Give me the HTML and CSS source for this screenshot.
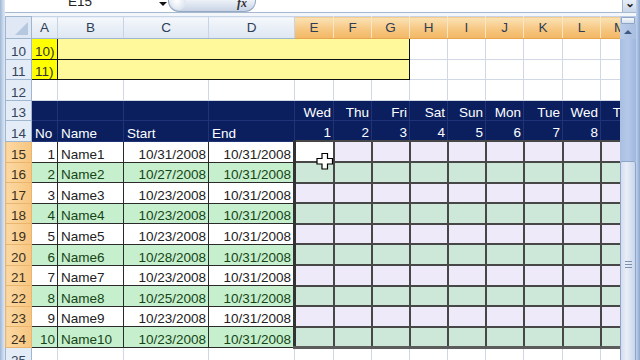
FILE: index.html
```html
<!DOCTYPE html>
<html>
<head>
<meta charset="utf-8">
<link rel="stylesheet" href="styles.css">
</head>
<body>
<div class="app">
  <div class="frame-l"></div>
  <div class="main">
    <div class="fbar">
      <div class="namebox"><span class="nb-text">E15</span><span class="nb-arrow"></span></div>
      <div class="fxpill"><span class="fx-bulb"></span><span class="fx">fx</span></div>
      <div class="finput"></div>
      <div class="fexpand">&#8964;</div>
    </div>
    <div class="gap"></div>
    <div class="area">
      <div class="sheet">
        <table class="grid">
          <colgroup>
            <col class="c-rh"><col class="c-a"><col class="c-b"><col class="c-c"><col class="c-d">
            <col class="c-e"><col class="c-n"><col class="c-n"><col class="c-n"><col class="c-n"><col class="c-n"><col class="c-e"><col class="c-n"><col class="c-n">
          </colgroup>
          <tr class="hd">
            <th class="corner"><span class="tri"></span></th>
            <th class="ch">A</th><th class="ch">B</th><th class="ch">C</th><th class="ch">D</th>
            <th class="ch sel">E</th><th class="ch sel">F</th><th class="ch sel">G</th><th class="ch sel">H</th><th class="ch sel">I</th><th class="ch sel">J</th><th class="ch sel">K</th><th class="ch sel">L</th><th class="ch sel">M</th>
          </tr>
          <tr>
            <th class="rh">10</th><td class="ya">10)</td><td class="yb" colspan="6"></td>
            <td></td><td></td><td></td><td></td><td></td><td></td>
          </tr>
          <tr>
            <th class="rh">11</th><td class="ya">11)</td><td class="yb" colspan="6"></td>
            <td></td><td></td><td></td><td></td><td></td><td></td>
          </tr>
          <tr>
            <th class="rh">12</th><td></td><td></td><td></td><td></td><td></td><td></td><td></td><td></td><td></td><td></td><td></td><td></td><td></td>
          </tr>
          <tr>
            <th class="rh">13</th><td class="nv"></td><td class="nv"></td><td class="nv"></td><td class="nv"></td>
            <td class="nv r">Wed</td><td class="nv r">Thu</td><td class="nv r">Fri</td><td class="nv r">Sat</td><td class="nv r">Sun</td><td class="nv r">Mon</td><td class="nv r">Tue</td><td class="nv r">Wed</td><td class="nv r">Thu</td>
          </tr>
          <tr>
            <th class="rh">14</th><td class="nv">No</td><td class="nv">Name</td><td class="nv">Start</td><td class="nv">End</td>
            <td class="nv r">1</td><td class="nv r">2</td><td class="nv r">3</td><td class="nv r">4</td><td class="nv r">5</td><td class="nv r">6</td><td class="nv r">7</td><td class="nv r">8</td><td class="nv r">9</td>
          </tr>
          <tr class="odd">
            <th class="rh hl">15</th><td class="d r">1</td><td class="d">Name1</td><td class="d r">10/31/2008</td><td class="d r">10/31/2008</td>
            <td class="s sl act"></td><td class="s"></td><td class="s"></td><td class="s"></td><td class="s"></td><td class="s"></td><td class="s"></td><td class="s"></td><td class="s"></td>
          </tr>
          <tr class="even">
            <th class="rh hl">16</th><td class="d r">2</td><td class="d">Name2</td><td class="d r">10/27/2008</td><td class="d r">10/31/2008</td>
            <td class="s sl"></td><td class="s"></td><td class="s"></td><td class="s"></td><td class="s"></td><td class="s"></td><td class="s"></td><td class="s"></td><td class="s"></td>
          </tr>
          <tr class="odd">
            <th class="rh hl">17</th><td class="d r">3</td><td class="d">Name3</td><td class="d r">10/23/2008</td><td class="d r">10/31/2008</td>
            <td class="s sl"></td><td class="s"></td><td class="s"></td><td class="s"></td><td class="s"></td><td class="s"></td><td class="s"></td><td class="s"></td><td class="s"></td>
          </tr>
          <tr class="even">
            <th class="rh hl">18</th><td class="d r">4</td><td class="d">Name4</td><td class="d r">10/23/2008</td><td class="d r">10/31/2008</td>
            <td class="s sl"></td><td class="s"></td><td class="s"></td><td class="s"></td><td class="s"></td><td class="s"></td><td class="s"></td><td class="s"></td><td class="s"></td>
          </tr>
          <tr class="odd">
            <th class="rh hl">19</th><td class="d r">5</td><td class="d">Name5</td><td class="d r">10/23/2008</td><td class="d r">10/31/2008</td>
            <td class="s sl"></td><td class="s"></td><td class="s"></td><td class="s"></td><td class="s"></td><td class="s"></td><td class="s"></td><td class="s"></td><td class="s"></td>
          </tr>
          <tr class="even">
            <th class="rh hl">20</th><td class="d r">6</td><td class="d">Name6</td><td class="d r">10/28/2008</td><td class="d r">10/31/2008</td>
            <td class="s sl"></td><td class="s"></td><td class="s"></td><td class="s"></td><td class="s"></td><td class="s"></td><td class="s"></td><td class="s"></td><td class="s"></td>
          </tr>
          <tr class="odd">
            <th class="rh hl">21</th><td class="d r">7</td><td class="d">Name7</td><td class="d r">10/23/2008</td><td class="d r">10/31/2008</td>
            <td class="s sl"></td><td class="s"></td><td class="s"></td><td class="s"></td><td class="s"></td><td class="s"></td><td class="s"></td><td class="s"></td><td class="s"></td>
          </tr>
          <tr class="even">
            <th class="rh hl">22</th><td class="d r">8</td><td class="d">Name8</td><td class="d r">10/25/2008</td><td class="d r">10/31/2008</td>
            <td class="s sl"></td><td class="s"></td><td class="s"></td><td class="s"></td><td class="s"></td><td class="s"></td><td class="s"></td><td class="s"></td><td class="s"></td>
          </tr>
          <tr class="odd">
            <th class="rh hl">23</th><td class="d r">9</td><td class="d">Name9</td><td class="d r">10/23/2008</td><td class="d r">10/31/2008</td>
            <td class="s sl"></td><td class="s"></td><td class="s"></td><td class="s"></td><td class="s"></td><td class="s"></td><td class="s"></td><td class="s"></td><td class="s"></td>
          </tr>
          <tr class="even last">
            <th class="rh hl">24</th><td class="d r">10</td><td class="d">Name10</td><td class="d r">10/23/2008</td><td class="d r">10/31/2008</td>
            <td class="s sl"></td><td class="s"></td><td class="s"></td><td class="s"></td><td class="s"></td><td class="s"></td><td class="s"></td><td class="s"></td><td class="s"></td>
          </tr>
          <tr>
            <th class="rh">25</th><td></td><td></td><td></td><td></td><td></td><td></td><td></td><td></td><td></td><td></td><td></td><td></td><td></td>
          </tr>
        </table>
      </div>
      <div class="vscroll">
        <div class="split"></div>
        <div class="upbtn"><span class="uparrow"></span></div>
        <div class="track"></div>
        <div class="thumb"><span class="grip"></span></div>
      </div>
    </div>
  </div>
  <div class="frame-r"></div>
</div>
<svg class="cursor" width="18" height="19" viewBox="0 0 18 19">
  <path d="M6 1.5 H11.5 V6.5 H16.5 V12 H11.5 V17 H6 V12 H1 V6.5 H6 Z" fill="#fff" stroke="#000" stroke-width="1.2"/>
</svg>
</body>
</html>
```
FILE: styles.css
```css
html, body {
  margin: 0;
  padding: 0;
}
body {
  width: 640px;
  height: 360px;
  overflow: hidden;
  position: relative;
  font-family: "Liberation Sans", Arial, sans-serif;
  background: #fff;
}
.app {
  display: flex;
  width: 640px;
  height: 360px;
}
.frame-l {
  width: 5px;
  flex: none;
  background: linear-gradient(to right, #9fb7d6, #c9d8ec 60%, #dfe8f4);
}
.frame-r {
  width: 4px;
  flex: none;
  background: linear-gradient(to right, #c3d3ea, #8aa5cf);
}
.main {
  width: 631px;
  flex: none;
  display: flex;
  flex-direction: column;
}
.fbar {
  height: 12px;
  display: flex;
  border-bottom: 1px solid #a7b9cf;
  background: #fff;
  overflow: hidden;
}
.namebox {
  width: 163px;
  flex: none;
  position: relative;
  display: flex;
}
.nb-text {
  font-size: 13.5px;
  line-height: 13px;
  margin-top: -5px;
  margin-left: 63px;
  color: #222;
}
.nb-arrow {
  margin-left: 67px;
  margin-top: 2px;
  width: 0;
  height: 0;
  border-left: 4px solid transparent;
  border-right: 4px solid transparent;
  border-top: 4px solid #111;
}
.fxpill {
  width: 86px;
  flex: none;
  height: 11px;
  border: 1px solid #95a9c4;
  border-top: none;
  border-radius: 0 0 11px 11px;
  background: linear-gradient(#eef2f8, #c8d4e5);
  position: relative;
  display: flex;
  justify-content: flex-end;
}
.fx-bulb {
  position: absolute;
  left: 2px;
  top: -5px;
  width: 15px;
  height: 15px;
  border-radius: 50%;
  background: radial-gradient(circle at 40% 40%, #ffffff, #dfe6f0 70%, #c2cfe2);
}
.fx {
  font-family: "Liberation Serif", serif;
  font-style: italic;
  font-weight: bold;
  font-size: 12px;
  line-height: 10px;
  margin-top: -2px;
  margin-right: 8px;
  color: #333;
}
.finput {
  flex: 1;
}
.fexpand {
  width: 13px;
  flex: none;
  background: linear-gradient(#e8eef7, #c9d6ea);
  border-left: 1px solid #a5b8d2;
  color: #222;
  font-size: 12px;
  line-height: 6px;
  text-align: center;
  font-weight: bold;
}
.gap {
  height: 3px;
  background: #f3f6fb;
}
.area {
  height: 344px;
  display: flex;
}
.sheet {
  width: 615px;
  flex: none;
  overflow: hidden;
}
.grid {
  table-layout: fixed;
  width: 633px;
  border-collapse: collapse;
}
.c-rh { width: 26px; }
.c-a { width: 26px; }
.c-b { width: 66px; }
.c-c { width: 85px; }
.c-d { width: 86px; }
.c-e { width: 39px; }
.c-n { width: 38px; }

.grid tr { height: 20.6px; }
.grid tr.hd { height: 22px; }

.grid td {
  border: 1px solid #d0d7e5;
  padding: 0 2px 0 3px;
  font-size: 13.5px;
  line-height: 15px;
  vertical-align: bottom;
  white-space: nowrap;
  overflow: hidden;
  color: #222;
  background: #fff;
}
.grid td.r { text-align: right; }

.ch {
  border: 1px solid #c7d4e6;
  border-bottom: 1px solid #9eb6ce;
  background: linear-gradient(#f5f8fc, #dde6f2);
  font-weight: normal;
  font-size: 13.5px;
  color: #2d3d55;
  text-align: center;
  vertical-align: middle;
  padding: 0;
}
.ch.sel {
  background: linear-gradient(#fbe3b6, #f6c57e 60%, #f3b765);
  border-left: 1px solid #fbe6c4;
  border-right: 1px solid #fbe6c4;
  border-bottom: 1px solid #e7a550;
}
.corner {
  background: #dfe8f4;
  border: 1px solid #9eb6ce;
  position: relative;
  padding: 0;
}
.tri {
  position: absolute;
  right: 3px;
  bottom: 3px;
  width: 0;
  height: 0;
  border-left: 13px solid transparent;
  border-bottom: 13px solid #b6c8df;
}
.rh {
  background: #e4ecf7;
  border: 1px solid #9eb6ce;
  border-top-color: #c5d3e5;
  font-weight: normal;
  font-size: 13.5px;
  line-height: 15px;
  color: #34445a;
  text-align: center;
  vertical-align: bottom;
  padding: 0;
}
.rh.hl {
  background: linear-gradient(to right, #fbd8a2, #f7c680);
  border-color: #e9b56f;
  border-top-color: #f5cf96;
  color: #3a3020;
}

.grid td.ya {
  background: #ffff00;
  border: 1px solid #111;
  border-left-color: #d0d7e5;
  color: #333;
}
.grid td.yb {
  background: #fff99c;
  border: 1px solid #111;
}

.grid td.nv {
  background: #0b1f5f;
  border: 1px solid #1f3476;
  color: #fff;
}

.grid td.d {
  border: 1px solid #2a2a2a;
}
.even td.d {
  background: #c6efce;
  color: #154515;
}

.grid td.s {
  border: 2px solid #474747;
  background: #eeeafa;
}
.even td.s {
  background: #cde8d8;
}
.grid td.s.act {
  background: #fff;
}
.grid td.s.sl {
  border-left: 3px solid #333;
}
.last td.s {
  border-bottom: 3px solid #5c5c5c;
}

.vscroll {
  width: 16px;
  flex: none;
  display: flex;
  flex-direction: column;
  background: #b9cbe6;
}
.split {
  height: 5px;
  margin: 1px 1px 0 1px;
  border: 1px solid #8fa5c6;
  border-radius: 1px;
  background: linear-gradient(#f6f8fb, #d5dfee);
}
.upbtn {
  height: 15px;
  display: flex;
  justify-content: center;
  align-items: center;
  background: linear-gradient(to right, #b9cbe6, #a9bfe2);
}
.uparrow {
  width: 0;
  height: 0;
  border-left: 4px solid transparent;
  border-right: 4px solid transparent;
  border-bottom: 4px solid #3f5a82;
}
.track {
  height: 122px;
  background: linear-gradient(to right, #a8bfe3, #b5c8e8 50%, #9fb6de);
}
.thumb {
  flex: 1;
  margin-bottom: -6px;
  border: 1px solid #8ea5c7;
  border-radius: 2px;
  background: linear-gradient(to right, #d4def0, #e9eef7 40%, #c9d6ec);
  position: relative;
}
.grip {
  position: absolute;
  left: 4px;
  top: 99px;
  width: 7px;
  height: 5px;
  border-top: 1px solid #7b8fae;
  border-bottom: 1px solid #7b8fae;
}
.grip::after {
  content: "";
  position: absolute;
  left: 0;
  right: 0;
  top: 2px;
  border-top: 1px solid #7b8fae;
}
.cursor {
  position: absolute;
  left: 316px;
  top: 152px;
}
```
